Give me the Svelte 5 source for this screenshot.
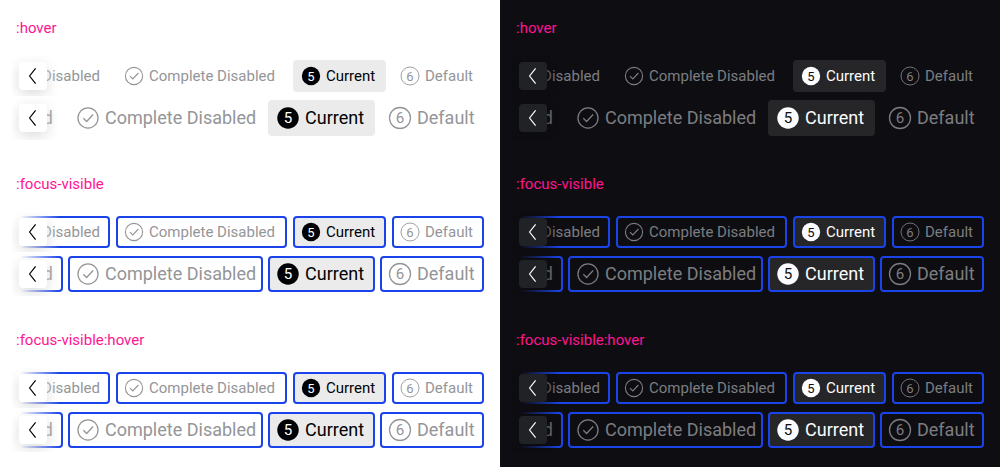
<script>
  const themes = ['light', 'dark'];
  const states = [
    { label: ':hover', focus: false },
    { label: ':focus-visible', focus: true },
    { label: ':focus-visible:hover', focus: true }
  ];
  const sizes = ['small', 'medium'];
  const steps = [
    { name: 'Disabled', kind: 'previous' },
    { name: 'Complete Disabled', kind: 'complete' },
    { name: 'Current', kind: 'current', number: 5 },
    { name: 'Default', kind: 'upcoming', number: 6 }
  ];
</script>

<main>
  {#each themes as theme}
    <div class="theme {theme}">
      {#each states as state}
        <section>
          <h2>{state.label}</h2>
          {#each sizes as size}
            <div class="stepper {size}" class:focus={state.focus}>
              <div class="track">
                {#each steps as step}
                  <button
                    type="button"
                    class="step {step.kind}"
                    disabled={step.kind !== 'current'}
                    aria-current={step.kind === 'current' ? 'step' : undefined}
                  >
                    {#if step.kind !== 'previous'}
                      <svg class="icon" viewBox="0 0 24 24" aria-hidden="true">
                        {#if step.kind === 'current'}
                          <circle class="disc" cx="12" cy="12" r="9.2" />
                        {:else}
                          <circle class="ring" cx="12" cy="12" r={step.kind === 'complete' ? 8.6 : 9} />
                        {/if}
                        {#if step.number}
                          <text x="12" y="16.5" text-anchor="middle">{step.number}</text>
                        {:else}
                          <path class="ring" d="M8 12.2 L10.8 15 L16.4 9" />
                        {/if}
                      </svg>
                    {/if}
                    <span>{step.name}</span>
                  </button>
                {/each}
              </div>
              <div class="fade"></div>
              <button type="button" class="prev" aria-label="Previous">
                <svg viewBox="0 0 28 28" aria-hidden="true">
                  <path d="M16.6 6.4 L10.6 14 L16.6 21.6" />
                </svg>
              </button>
            </div>
          {/each}
        </section>
      {/each}
    </div>
  {/each}
</main>

<style>
  :global(body) {
    margin: 0;
  }
  main {
    display: grid;
    grid-template-columns: 1fr 1fr;
    font-family: Roboto, 'Liberation Sans', sans-serif;
    overflow: hidden;
  }
  .theme {
    --bg: #fff;
    --clear: rgba(255, 255, 255, 0);
    --fg: #010205;
    --muted: #949598;
    --fill: #ebebeb;
    --nav: #fff;
    min-width: 0;
    padding: 16px 12px;
    background: var(--bg);
    color: var(--fg);
  }
  .dark {
    --bg: #0e0e12;
    --clear: rgba(14, 14, 18, 0);
    --fg: #fbfcff;
    --muted: #7c7d80;
    --fill: #262628;
    --nav: #212225;
  }
  section {
    display: flex;
    flex-direction: column;
    padding-bottom: 32px;
  }
  section:last-child {
    padding-bottom: 0;
  }
  h2 {
    margin: 0 4px 16px;
    color: #ff1493;
    font-size: 15px;
    line-height: 24px;
    font-weight: 400;
  }
  .stepper {
    position: relative;
    overflow: hidden;
    padding: 4px;
  }
  .track {
    display: flex;
    justify-content: flex-end;
    gap: 6px;
  }
  .medium .track {
    gap: 5px;
  }
  button {
    box-sizing: border-box;
    margin: 0;
    font: inherit;
    color: inherit;
  }
  .step {
    flex: none;
    display: flex;
    align-items: center;
    gap: 3px;
    height: 32px;
    padding: 0 8px 0 4px;
    border: 2px solid transparent;
    border-radius: 4px;
    background: transparent;
    color: var(--muted);
    font-size: 15px;
    line-height: 24px;
    white-space: nowrap;
  }
  .previous {
    min-width: 108px;
    justify-content: flex-end;
  }
  .medium .step {
    height: 36px;
    font-size: 18px;
    line-height: 28px;
  }
  .small .complete {
    width: 171px;
  }
  .small .current {
    width: 93px;
  }
  .small .upcoming {
    width: 92px;
  }
  .medium .complete {
    width: 195px;
  }
  .medium .current {
    width: 107px;
  }
  .medium .upcoming {
    width: 104px;
  }
  .step.current {
    background: var(--fill);
    color: var(--fg);
  }
  .focus .step,
  .focus .step.current {
    border-color: #1a44ea;
  }
  .icon {
    flex: none;
    width: 24px;
    height: 24px;
  }
  .medium .icon {
    width: 28px;
    height: 28px;
  }
  .ring {
    fill: none;
    stroke: currentColor;
    stroke-width: 1.1;
  }
  .small .upcoming .ring {
    stroke-width: 0.9;
  }
  .disc {
    fill: var(--fg);
  }
  text {
    fill: currentColor;
    font-size: 13px;
  }
  .current text {
    fill: var(--bg);
  }
  .fade {
    position: absolute;
    top: 0;
    bottom: 0;
    left: 0;
    width: 48px;
    background: linear-gradient(90deg, var(--bg) 18%, var(--clear));
  }
  .prev {
    position: absolute;
    top: 6px;
    left: 7px;
    width: 28px;
    height: 28px;
    padding: 0;
    border: 0;
    border-radius: 4px;
    background: var(--nav);
    box-shadow: 0 4px 14px rgba(0, 0, 0, 0.14);
  }
  .medium .prev {
    top: 8px;
  }
  .prev svg {
    display: block;
    width: 28px;
    height: 28px;
  }
  .prev path {
    fill: none;
    stroke: currentColor;
    stroke-width: 1.2;
  }
</style>
